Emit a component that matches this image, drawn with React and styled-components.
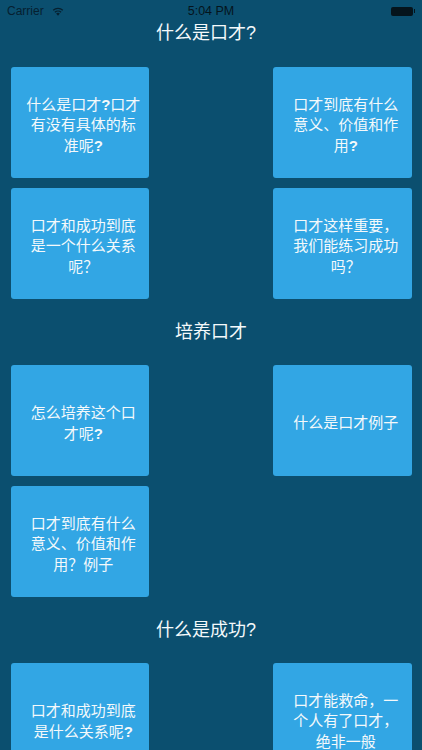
import styled, { createGlobalStyle } from "styled-components"

const GlobalStyle = createGlobalStyle`
  html, body {
    margin: 0;
    padding: 0;
    height: 750px;
    overflow: hidden;
    background: #0b4f6f;
  }
`

const sections = [
  {
    title: "什么是口才?  ",
    cards: [
      ["什么是口才?口才", "有没有具体的标", "准呢?"],
      ["口才到底有什么", "意义、价值和作", "用?"],
      ["口才和成功到底", "是一个什么关系", "呢？"],
      ["口才这样重要，", "我们能练习成功", "吗？"],
    ],
  },
  {
    title: "培养口才",
    cards: [["怎么培养这个口", "才呢?"], ["什么是口才例子"], ["口才到底有什么", "意义、价值和作", "用？例子"]],
  },
  {
    title: "什么是成功?  ",
    cards: [["口才和成功到底", "是什么关系呢?"], ["口才能救命，一", "个人有了口才，", "绝非一般"]],
  },
]

const WifiIcon = () => (
  <svg width="12" height="9" viewBox="0 0 14 10">
    <path d="M7 10 4.8 7.4a3.2 3.2 0 0 1 4.4 0z" fill="#06202f" />
    <path d="M3.4 5.9a5.2 5.2 0 0 1 7.2 0M1.4 3.5a8.2 8.2 0 0 1 11.2 0" fill="none" stroke="#06202f" strokeWidth="1.5" />
  </svg>
)

// the ascii question marks come out heavier than the text round them
const CardLine = ({ text }) => (
  <Line>
    {text.split(/(\?)/).filter(Boolean).map((part, index) =>
      part === "?" ? <Mark key={index}>?</Mark> : <span key={index}>{part}</span>
    )}
  </Line>
)

export default function App() {
  return (
    <>
      <GlobalStyle />
      <Page>
        <StatusBar>
          <StatusLeft>
            <span>Carrier</span>
            <WifiIcon />
          </StatusLeft>
          <StatusTime>5:04 PM</StatusTime>
          <StatusRight>
            <Battery />
            <BatteryTip />
          </StatusRight>
        </StatusBar>
        {sections.map((section, index) => (
          <section key={section.title}>
            <Heading $first={index === 0}>{section.title}</Heading>
            <CardGrid>
              {section.cards.map((lines) => (
                <Card key={lines[0]}>
                  {lines.map((line) => (
                    <CardLine key={line} text={line} />
                  ))}
                </Card>
              ))}
            </CardGrid>
          </section>
        ))}
      </Page>
    </>
  )
}

const Page = styled.div`
  width: 422px;
  height: 750px;
  overflow: hidden;
  background: #0b4f6f;
  font-family: "Liberation Sans", "Noto Sans CJK SC", sans-serif;
`
const StatusBar = styled.div`
  height: 20px;
  box-sizing: border-box;
  padding: 2px 7px 0 7px;
  display: grid;
  grid-template-columns: 1fr auto 1fr;
  align-items: center;
  font-size: 12px;
  color: #06202f;
`
const StatusLeft = styled.div`
  display: flex;
  align-items: center;
  gap: 8px;
`
const StatusTime = styled.div`
  font-size: 12.5px;
  color: #05141c;
`
const StatusRight = styled.div`
  display: flex;
  align-items: center;
  justify-content: flex-end;
`
const Battery = styled.div`
  width: 22px;
  height: 9px;
  border-radius: 2px;
  background: #05141c;
`
const BatteryTip = styled.div`
  width: 1px;
  height: 4px;
  margin-left: 1px;
  background: #05141c;
`
const Heading = styled.h2`
  margin: 0;
  padding-top: ${({ $first }) => ($first ? "1px" : "21px")};
  padding-bottom: ${({ $first }) => ($first ? "22px" : "21px")};
  height: 24px;
  line-height: 24px;
  white-space: pre;
  font-size: 18px;
  font-weight: 400;
  text-align: center;
  color: #f4f9fb;
`
const CardGrid = styled.div`
  display: grid;
  grid-template-columns: 138.5px 138.5px;
  justify-content: space-between;
  row-gap: 10px;
  padding: 0 10.5px;
`
const Card = styled.div`
  height: 111px;
  box-sizing: border-box;
  padding: 6px 8px 0 15px;
  display: flex;
  flex-direction: column;
  justify-content: center;
  border-radius: 3px;
  background: #32a6e4;
  color: #f4f9fb;
  font-size: 15px;
  line-height: 20.5px;
`
const Line = styled.div`
  display: flex;
  justify-content: center;
  white-space: pre;
`
const Mark = styled.span`
  font-weight: 700;
`
